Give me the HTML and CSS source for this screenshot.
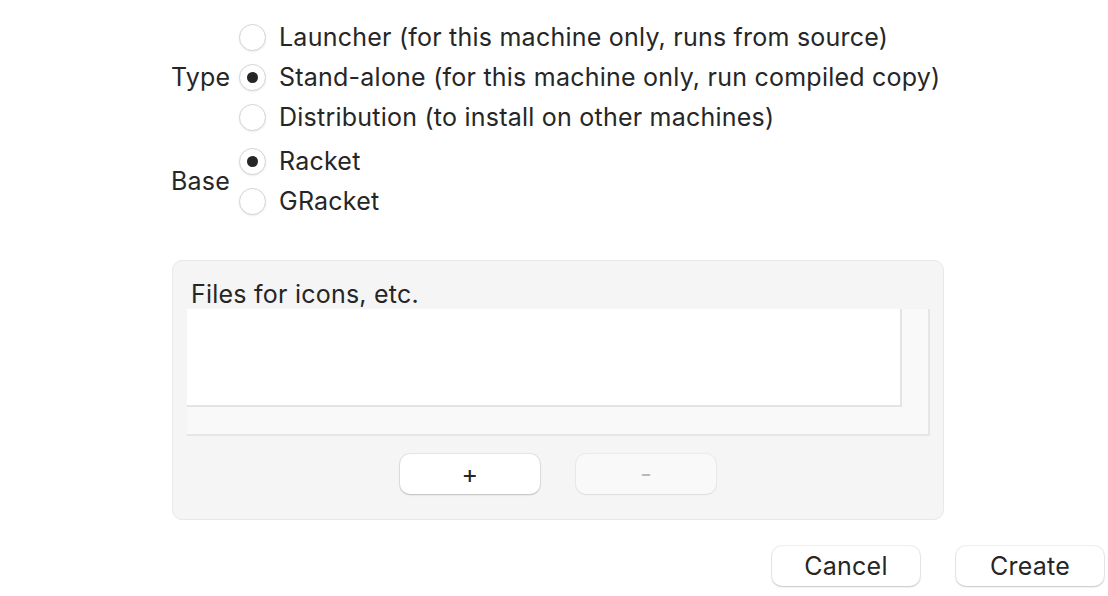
FILE: index.html
```html
<!DOCTYPE html>
<html lang="en">
<head>
  <meta charset="UTF-8">
  <meta name="viewport" content="width=device-width, initial-scale=1.0">
  <title>Create Executable</title>
  <link rel="stylesheet" href="styles.css">
</head>
<body>

  <div class="dialog">

    <div class="choice-group">
      <div class="group-label">Type</div>
      <div class="options">
        <label class="option"><span class="radio"></span>Launcher (for this machine only, runs from source)</label>
        <label class="option"><span class="radio checked"></span>Stand-alone (for this machine only, run compiled copy)</label>
        <label class="option"><span class="radio"></span>Distribution (to install on other machines)</label>
      </div>
    </div>

    <div class="choice-group base-group">
      <div class="group-label">Base</div>
      <div class="options">
        <label class="option"><span class="radio checked"></span>Racket</label>
        <label class="option"><span class="radio"></span>GRacket</label>
      </div>
    </div>

    <div class="files-box">
      <div class="files-title">Files for icons, etc.</div>
      <div class="file-list">
        <div class="file-list-inner"></div>
      </div>
      <div class="list-buttons">
        <button class="btn">+</button>
        <button class="btn disabled">-</button>
      </div>
    </div>

    <div class="footer">
      <button class="btn wide">Cancel</button>
      <button class="btn wide">Create</button>
    </div>

  </div>

</body>
</html>
```

FILE: styles.css
```css
body {
  margin: 0;
  padding: 0;
  background-color: #fff;
  font-family: Inter, "Noto Sans", sans-serif;
  font-size: 25px;
  letter-spacing: 0.23px;
  color: #262626;
}
.dialog {
  width: 1108px;
  height: 596px;
  padding-top: 17px;
  box-sizing: border-box;
}
.choice-group {
  display: flex;
  align-items: center;
  padding-left: 171px;
}
.base-group {
  margin-top: 4px;
}
.group-label {
  width: 57px;
  text-align: right;
  margin-right: 11px;
}
.options {
  display: flex;
  flex-direction: column;
}
.option {
  display: flex;
  align-items: center;
  height: 40px;
}
.radio {
  width: 25px;
  height: 25px;
  margin-right: 13px;
  border-radius: 50%;
  border: 1px solid #d4d4d4;
  background-color: #fff;
  box-shadow: 0 1px 2px rgba(0, 0, 0, 0.08);
  display: flex;
  align-items: center;
  justify-content: center;
}
.radio.checked::after {
  content: "";
  width: 11px;
  height: 11px;
  border-radius: 50%;
  background-color: #262626;
}
.files-box {
  width: 772px;
  height: 260px;
  margin: 39px 0 0 172px;
  box-sizing: border-box;
  padding: 18px 14px 0 14px;
  background-color: #f5f5f5;
  border: 1px solid #e8e8e8;
  border-radius: 10px;
}
.files-title {
  padding-left: 4px;
  line-height: 30px;
  height: 30px;
}
.file-list {
  width: 743px;
  height: 127px;
  box-sizing: border-box;
  background-color: #f9f9f9;
  border-right: 2px solid #e6e6e6;
  border-bottom: 2px solid #e6e6e6;
}
.file-list-inner {
  width: 715px;
  height: 98px;
  box-sizing: border-box;
  background-color: #fff;
  border-right: 2px solid #e4e4e4;
  border-bottom: 2px solid #e4e4e4;
}
.list-buttons {
  display: flex;
  justify-content: center;
  gap: 36px;
  margin-top: 18px;
}
.btn {
  width: 140px;
  height: 40px;
  padding: 0;
  border: none;
  border-radius: 10px;
  background-color: #fff;
  font-family: Inter, "Noto Sans", sans-serif;
  font-size: 25px;
  letter-spacing: 0.23px;
  color: #262626;
  box-shadow: 0 0 0 1px rgba(0, 0, 0, 0.06), 0 1px 2px rgba(0, 0, 0, 0.18);
}
.btn.disabled {
  background-color: #f9f9f9;
  color: #b8b8b8;
  box-shadow: 0 0 0 1px rgba(0, 0, 0, 0.04), 0 1px 2px rgba(0, 0, 0, 0.06);
}
.footer {
  display: flex;
  justify-content: flex-end;
  gap: 36px;
  margin-top: 26px;
  padding-right: 4px;
}
.btn.wide {
  width: 148px;
}
```
